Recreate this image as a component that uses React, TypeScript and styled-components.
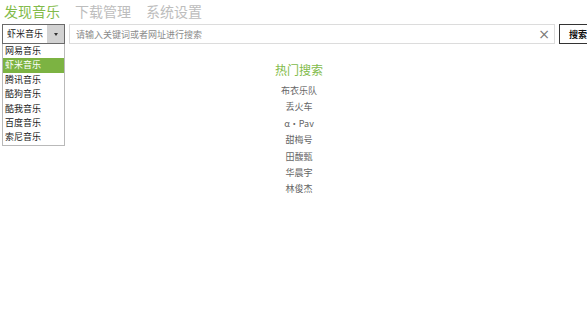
import React from "react";
import styled, { createGlobalStyle } from "styled-components";

const GlobalStyle = createGlobalStyle`
  html, body {
    margin: 0;
    padding: 0;
    background: #fff;
    overflow: hidden;
  }
  body {
    font-family: "Noto Sans CJK SC", "Noto Sans", sans-serif;
  }
`;

const sources = ["网易音乐", "虾米音乐", "腾讯音乐", "酷狗音乐", "酷我音乐", "百度音乐", "索尼音乐"];
const hotWords = ["布衣乐队", "丢火车", "α·Pav", "甜梅号", "田馥甄", "华晨宇", "林俊杰"];

const Page = styled.div`
  width: 598px;
  height: 331px;
  position: relative;
`;

const Tabs = styled.nav`
  display: flex;
  gap: 15px;
  padding: 0 0 0 4px;
  height: 22px;
  align-items: center;
`;

const Tab = styled.span<{ $active?: boolean }>`
  font-size: 14px;
  line-height: 18px;
  color: ${(p) => (p.$active ? "#82bb4a" : "#bdbdbd")};
`;

const SearchBar = styled.div`
  display: flex;
  align-items: flex-start;
  padding: 2px 0 0 2px;
  gap: 4px;
`;

const SelectWrap = styled.div`
  position: relative;
  width: 63px;
`;

const SelectBox = styled.div`
  display: flex;
  height: 18px;
  border: 1px solid #6a6a6a;
  background: #fff;
`;

const SelectValue = styled.span`
  flex: 1;
  font-size: 9px;
  line-height: 18px;
  padding-left: 4px;
  color: #222;
`;

const Arrow = styled.span`
  width: 17px;
  background: #d2d2d2;
  display: flex;
  align-items: center;
  justify-content: center;
  &::after {
    content: "";
    border-left: 2px solid transparent;
    border-right: 2px solid transparent;
    border-top: 3px solid #333;
  }
`;

const Menu = styled.ul`
  position: absolute;
  top: 20px;
  left: 0;
  width: 63px;
  margin: 0;
  padding: 0;
  list-style: none;
  border: 1px solid #b9b9b9;
  border-top: none;
  background: #fff;
  box-sizing: border-box;
`;

const MenuItem = styled.li<{ $selected?: boolean }>`
  height: 14.4px;
  font-size: 9px;
  line-height: 14.4px;
  padding-left: 2px;
  color: ${(p) => (p.$selected ? "#fff" : "#222")};
  background: ${(p) => (p.$selected ? "#7cb342" : "transparent")};
`;

const InputBox = styled.div`
  width: 474px;
  height: 18px;
  border: 1px solid #dcdcdc;
  display: flex;
  align-items: center;
  padding: 0 4px 0 6px;
  box-sizing: content-box;
`;

const Input = styled.input`
  flex: 1;
  border: none;
  outline: none;
  font-family: inherit;
  font-size: 9px;
  padding: 0;
  color: #333;
  &::placeholder {
    color: #8a8a8a;
  }
`;

const Clear = styled.span`
  font-size: 14px;
  line-height: 18px;
  color: #777;
  font-family: "DejaVu Sans", sans-serif;
`;

const SearchButton = styled.button`
  height: 20px;
  width: 38px;
  border: 1.5px solid #333;
  background: #fff;
  font-family: inherit;
  font-size: 9px;
  font-weight: bold;
  padding: 0;
  margin: 0;
  color: #111;
`;

const Hot = styled.section`
  display: flex;
  flex-direction: column;
  align-items: center;
  padding-top: 17px;
`;

const HotTitle = styled.h3`
  margin: 0 0 4px;
  font-weight: normal;
  font-size: 12px;
  line-height: 18px;
  color: #82bb4a;
`;

const HotItem = styled.div`
  font-size: 9px;
  line-height: 16.4px;
  color: #666;
`;

export default function App() {
  return (
    <Page>
      <GlobalStyle />
      <Tabs>
        <Tab $active>发现音乐</Tab>
        <Tab>下载管理</Tab>
        <Tab>系统设置</Tab>
      </Tabs>
      <SearchBar>
        <SelectWrap>
          <SelectBox>
            <SelectValue>虾米音乐</SelectValue>
            <Arrow />
          </SelectBox>
          <Menu>
            {sources.map((s) => (
              <MenuItem key={s} $selected={s === "虾米音乐"}>
                {s}
              </MenuItem>
            ))}
          </Menu>
        </SelectWrap>
        <InputBox>
          <Input placeholder="请输入关键词或者网址进行搜索" />
          <Clear>×</Clear>
        </InputBox>
        <SearchButton>搜索</SearchButton>
      </SearchBar>
      <Hot>
        <HotTitle>热门搜索</HotTitle>
        {hotWords.map((w) => (
          <HotItem key={w}>{w}</HotItem>
        ))}
      </Hot>
    </Page>
  );
}
